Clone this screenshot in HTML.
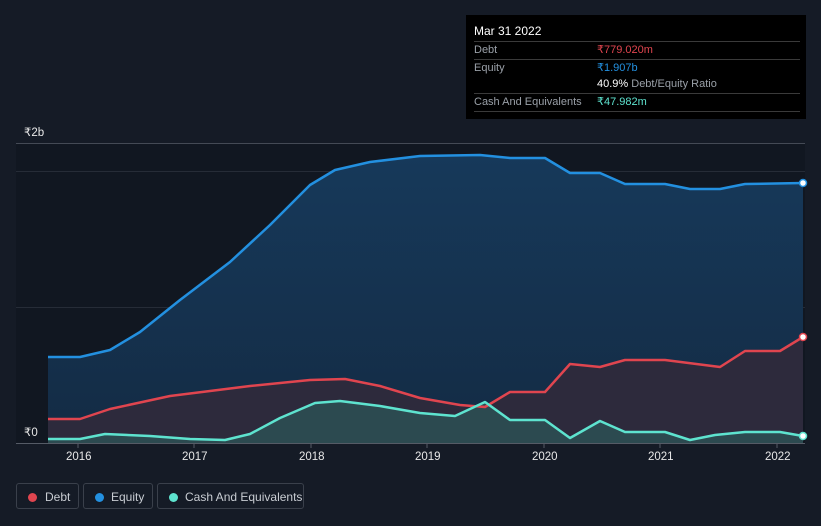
<!DOCTYPE html><html><head><style>
body{margin:0;background:#151b26;font-family:"Liberation Sans",sans-serif;}
.wrap{position:relative;width:821px;height:526px;overflow:hidden;background:#151b26}
.tip{position:absolute;left:466px;top:15px;width:340px;height:104px;background:#000;color:#fff;font-size:11px}
.tip .r{position:absolute;left:8px;right:6px;border-top:1px solid #3a3a3a;height:17px;line-height:17px}
.lbl{color:#9aa0a8}
.leg{position:absolute;top:483px;height:26px;border:1px solid #3a404b;border-radius:3px;color:#c8ccd2;font-size:12px;line-height:26px;box-sizing:border-box}
.dot{position:absolute;top:9px;width:9px;height:9px;border-radius:50%}
.ax{position:absolute;color:#e8e8e8;font-size:11.5px}
</style></head><body><div class="wrap">
<svg width="821" height="526" style="position:absolute;left:0;top:0">
<defs>
<linearGradient id="ge" x1="0" y1="0" x2="0" y2="1"><stop offset="0" stop-color="#16395a"/><stop offset="1" stop-color="#142b44"/></linearGradient>
</defs>
<rect x="16" y="143" width="789" height="300" fill="#111721"/>
<line x1="16" y1="143.5" x2="805" y2="143.5" stroke="#444a55"/>
<line x1="16" y1="171.5" x2="805" y2="171.5" stroke="#262c37"/>
<line x1="16" y1="307.5" x2="805" y2="307.5" stroke="#262c37"/>
<polygon fill="url(#ge)" points="48,443 48,357 80,357 110,350 140,332 180,300 230,262 270,225 310,185 335,170 370,162 420,156 480,155 510,158 545,158 570,173 600,173 625,184 665,184 690,189 720,189 745,184 803,183 803,443"/>
<polygon fill="#2d2a3c" points="48,443 48,419 80,419 110,409 170,396 250,386 310,380 345,379 380,386 420,398 460,405 485,407 510,392 545,392 570,364 600,367 625,360 665,360 720,367 745,351 780,351 803,337 803,443"/>
<polygon fill="#2c4a50" points="48,443 48,439 80,439 105,434 150,436 190,439 225,440 250,434 280,418 315,403 340,401 380,406 420,413 455,416 485,402 510,420 545,420 570,438 600,421 625,432 665,432 690,440 715,435 745,432 780,432 803,436 803,443"/>
<polyline fill="none" stroke="#2390e0" stroke-width="2.5" stroke-linejoin="round" points="48,357 80,357 110,350 140,332 180,300 230,262 270,225 310,185 335,170 370,162 420,156 480,155 510,158 545,158 570,173 600,173 625,184 665,184 690,189 720,189 745,184 803,183"/>
<polyline fill="none" stroke="#e0454f" stroke-width="2.5" stroke-linejoin="round" points="48,419 80,419 110,409 170,396 250,386 310,380 345,379 380,386 420,398 460,405 485,407 510,392 545,392 570,364 600,367 625,360 665,360 720,367 745,351 780,351 803,337"/>
<polyline fill="none" stroke="#5ee3cf" stroke-width="2.5" stroke-linejoin="round" points="48,439 80,439 105,434 150,436 190,439 225,440 250,434 280,418 315,403 340,401 380,406 420,413 455,416 485,402 510,420 545,420 570,438 600,421 625,432 665,432 690,440 715,435 745,432 780,432 803,436"/>
<line x1="16" y1="443.5" x2="805" y2="443.5" stroke="#555b66"/>
<g stroke="#555b66"><line x1="78" y1="443" x2="78" y2="448"/><line x1="194" y1="443" x2="194" y2="448"/><line x1="311" y1="443" x2="311" y2="448"/><line x1="427" y1="443" x2="427" y2="448"/><line x1="544" y1="443" x2="544" y2="448"/><line x1="660" y1="443" x2="660" y2="448"/><line x1="777" y1="443" x2="777" y2="448"/></g>
<circle cx="803" cy="183" r="3.5" fill="#fff" stroke="#2390e0" stroke-width="1.5"/>
<circle cx="803" cy="337" r="3.5" fill="#fff" stroke="#e0454f" stroke-width="1.5"/>
<circle cx="803" cy="436" r="3.5" fill="#fff" stroke="#5ee3cf" stroke-width="1.5"/>
</svg>
<div class="ax" style="left:24px;top:125px">₹2b</div>
<div class="ax" style="left:24px;top:425px">₹0</div>
<div class="ax" style="left:66px;top:451px">2016</div>
<div class="ax" style="left:182px;top:451px">2017</div>
<div class="ax" style="left:299px;top:451px">2018</div>
<div class="ax" style="left:415px;top:451px">2019</div>
<div class="ax" style="left:532px;top:451px">2020</div>
<div class="ax" style="left:648px;top:451px">2021</div>
<div class="ax" style="left:765px;top:451px">2022</div>
<div class="tip">
<div style="position:absolute;left:8px;top:9px;font-size:12px">Mar 31 2022</div>
<div class="r" style="top:26px"><span class="lbl">Debt</span><span style="position:absolute;left:123px;color:#e0454f">₹779.020m</span></div>
<div class="r" style="top:44px"><span class="lbl">Equity</span><span style="position:absolute;left:123px;color:#2390e0">₹1.907b</span></div>
<div class="r" style="top:61px;border:none"><span style="position:absolute;left:123px">40.9% <span class="lbl">Debt/Equity Ratio</span></span></div>
<div class="r" style="top:78px"><span class="lbl">Cash And Equivalents</span><span style="position:absolute;left:123px;color:#5ee3cf">₹47.982m</span></div>
<div class="r" style="top:96px;height:0"></div>
</div>
<div class="leg" style="left:16px;width:63px"><span class="dot" style="left:11px;background:#e0454f"></span><span style="position:absolute;left:28px">Debt</span></div>
<div class="leg" style="left:83px;width:70px"><span class="dot" style="left:11px;background:#2390e0"></span><span style="position:absolute;left:27px">Equity</span></div>
<div class="leg" style="left:157px;width:147px"><span class="dot" style="left:11px;background:#5ee3cf"></span><span style="position:absolute;left:27px">Cash And Equivalents</span></div>
</div></body></html>
